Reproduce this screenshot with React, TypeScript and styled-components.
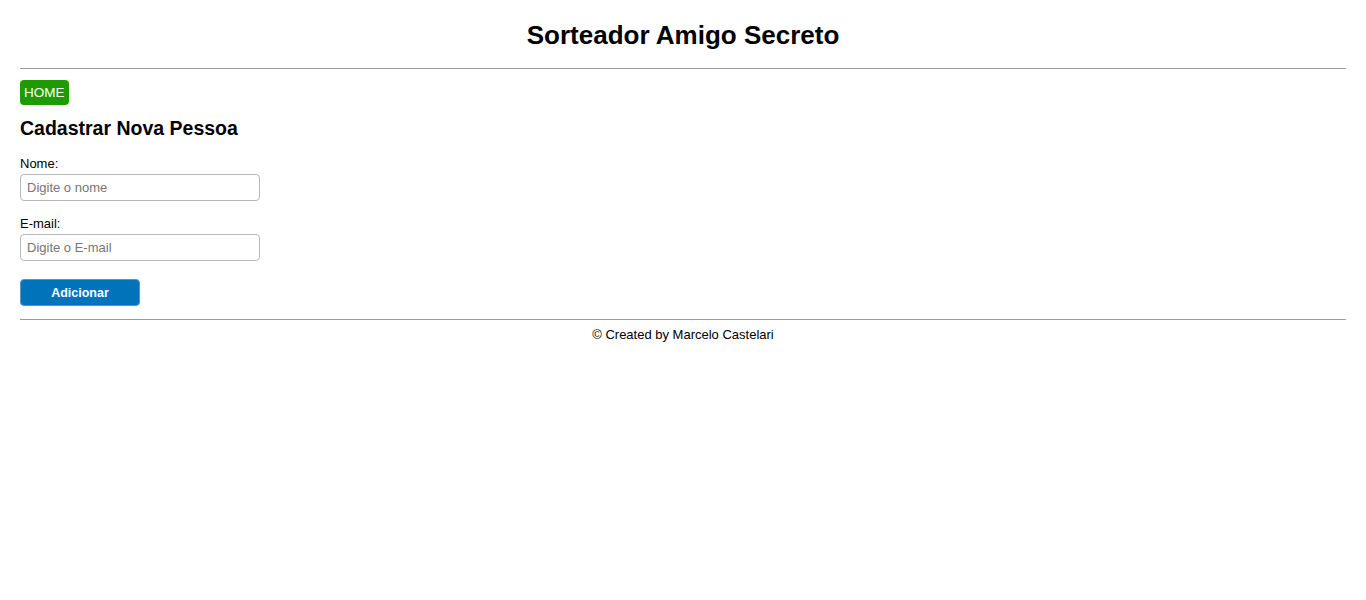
import React from "react";
import styled, { createGlobalStyle } from "styled-components";

const Global = createGlobalStyle`
  html, body { margin: 0; padding: 0; background: #fff; }
  body { font-family: "Liberation Sans", Arial, sans-serif; color: #000; font-size: 13px; }
  * { box-sizing: border-box; }
`;

const Page = styled.div`
  padding: 0 20px;
  display: flex;
  flex-direction: column;
`;

const Header = styled.header`
  display: flex;
  justify-content: center;
  padding-top: 20px;
  height: 68px;
`;

const Title = styled.h1`
  margin: 0;
  font-size: 26px;
  line-height: 30px;
  font-weight: bold;
`;

const Rule = styled.hr`
  margin: 0;
  border: 0;
  border-top: 1px solid #9a9a9a;
  height: 1px;
  width: 100%;
`;

const Nav = styled.nav`
  display: flex;
  padding-top: 11px;
`;

const HomeLink = styled.a`
  display: inline-flex;
  align-items: center;
  justify-content: center;
  height: 25px;
  padding: 0 4px;
  background: #1f9a00;
  color: #fff;
  font-size: 13.5px;
  border-radius: 4px;
  text-decoration: none;
`;

const Main = styled.main`
  display: flex;
  flex-direction: column;
  padding-bottom: 13px;
`;

const SectionTitle = styled.h2`
  margin: 12px 0 0;
  font-size: 19.5px;
  line-height: 22px;
  font-weight: bold;
`;

const Form = styled.form`
  display: flex;
  flex-direction: column;
  align-items: flex-start;
  gap: 15px;
  margin-top: 17px;
`;

const Field = styled.div`
  display: flex;
  flex-direction: column;
  align-items: flex-start;
`;

const Label = styled.label`
  font-size: 13px;
  line-height: 15px;
  margin-bottom: 3px;
`;

const Input = styled.input`
  width: 240px;
  height: 27px;
  border: 1px solid #b9b9b9;
  border-radius: 4px;
  padding: 0 6px;
  font-family: "Liberation Sans", Arial, sans-serif;
  font-size: 13px;
  color: #000;
  outline: none;
  &::placeholder { color: #767676; }
`;

const SubmitButton = styled.button`
  width: 120px;
  height: 27px;
  margin-top: 3px;
  border: 1px solid #5a93c4;
  border-radius: 4px;
  background: #0073ba;
  color: #fff;
  font-family: "Liberation Sans", Arial, sans-serif;
  font-size: 12.5px;
  font-weight: bold;
  cursor: pointer;
`;

const Footer = styled.footer`
  display: flex;
  justify-content: center;
  padding-top: 7px;
  font-size: 13px;
  line-height: 15px;
`;

export default function App() {
  return (
    <>
      <Global />
      <Page>
        <Header>
          <Title>Sorteador Amigo Secreto</Title>
        </Header>
        <Rule />
        <Nav>
          <HomeLink href="#">HOME</HomeLink>
        </Nav>
        <Main>
          <SectionTitle>Cadastrar Nova Pessoa</SectionTitle>
          <Form onSubmit={(e) => e.preventDefault()}>
            <Field>
              <Label htmlFor="nome">Nome:</Label>
              <Input id="nome" placeholder="Digite o nome" />
            </Field>
            <Field>
              <Label htmlFor="email">E-mail:</Label>
              <Input id="email" placeholder="Digite o E-mail" />
            </Field>
            <SubmitButton type="submit">Adicionar</SubmitButton>
          </Form>
        </Main>
        <Rule />
        <Footer>© Created by Marcelo Castelari</Footer>
      </Page>
    </>
  );
}
